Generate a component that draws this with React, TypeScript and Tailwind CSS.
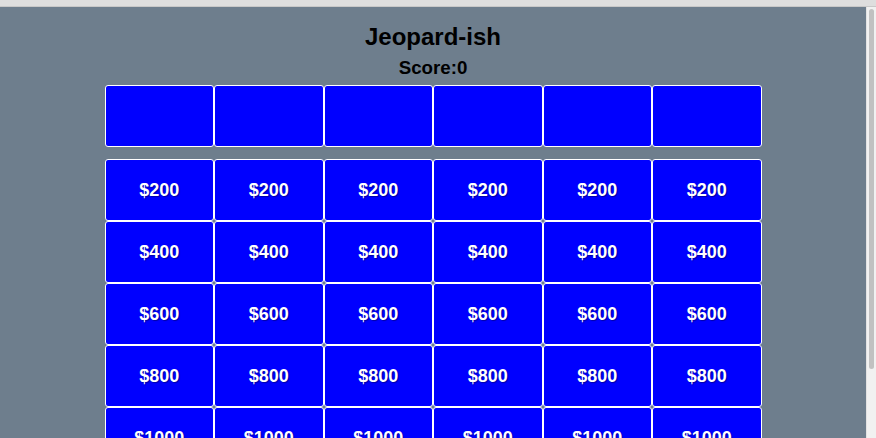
import React from 'react';

const categories = ['', '', '', '', '', ''];
const values = [200, 400, 600, 800, 1000];

export default function App() {
  return (
    <div className="h-[438px] w-[876px] overflow-hidden flex flex-col bg-[#6e7e8d] font-['Liberation_Sans',Arial,sans-serif]">
      <div className="h-[7px] shrink-0 bg-[#dedede] border-b border-[#c8c8c8]" />
      <div className="flex flex-1 min-h-0">
        <div className="flex-1 flex flex-col items-center pt-[16px] overflow-hidden">
          <h1 className="text-[24px] leading-[28px] font-bold text-black">Jeopard-ish</h1>
          <h2 className="mt-[6px] text-[18.72px] leading-[22px] font-bold text-black">Score:0</h2>

          <div className="mt-[6px] grid grid-cols-6 w-[657px]">
            {categories.map((c, i) => (
              <div
                key={i}
                className="h-[62px] bg-[#0000ff] border border-white rounded-[3px] flex items-center justify-center text-white font-bold"
              >
                {c}
              </div>
            ))}
          </div>

          <div className="mt-[12px] grid grid-cols-6 w-[657px]">
            {values.map((v) =>
              categories.map((_, i) => (
                <div
                  key={`${v}-${i}`}
                  className="h-[62px] bg-[#0000ff] border border-white rounded-[3px] flex items-center justify-center text-white font-bold text-[18px] [text-shadow:1px_1px_1px_rgba(0,0,0,0.35)]"
                >
                  ${v}
                </div>
              ))
            )}
          </div>
        </div>

        <div className="w-[10px] shrink-0 bg-[#f1f1f1] border-l border-[#e2e2e2] pt-[2px] px-[2px]">
          <div className="h-[360px] rounded-[3px] bg-[#c1c1c1]" />
        </div>
      </div>
    </div>
  );
}
